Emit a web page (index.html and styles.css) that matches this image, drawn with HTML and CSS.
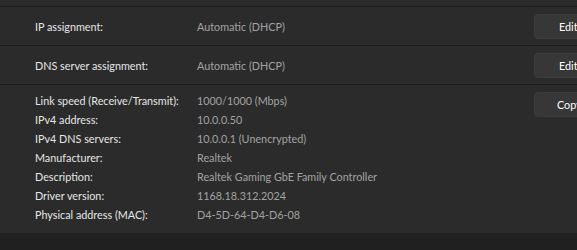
FILE: index.html
```html
<!DOCTYPE html>
<html lang="en">
<head>
    <meta charset="UTF-8">
    <title>Network properties</title>
    <link rel="stylesheet" href="styles.css">
</head>
<body>
    <div class="card">
        <div class="stub"></div>
        <div class="row">
            <div class="label">IP assignment:</div>
            <div class="value">Automatic (DHCP)</div>
            <div class="btn">Edit</div>
        </div>
        <div class="row">
            <div class="label">DNS server assignment:</div>
            <div class="value">Automatic (DHCP)</div>
            <div class="btn">Edit</div>
        </div>
        <div class="row info">
            <div class="grid">
                <div class="label">Link speed (Receive/Transmit):</div>
                <div class="value">1000/1000 (Mbps)</div>
                <div class="label">IPv4 address:</div>
                <div class="value">10.0.0.50</div>
                <div class="label">IPv4 DNS servers:</div>
                <div class="value">10.0.0.1 (Unencrypted)</div>
                <div class="label">Manufacturer:</div>
                <div class="value">Realtek</div>
                <div class="label">Description:</div>
                <div class="value">Realtek Gaming GbE Family Controller</div>
                <div class="label">Driver version:</div>
                <div class="value">1168.18.312.2024</div>
                <div class="label">Physical address (MAC):</div>
                <div class="value">D4-5D-64-D4-D6-08</div>
            </div>
            <div class="btn">Copy</div>
        </div>
    </div>
</body>
</html>
```

FILE: styles.css
```css
body {
    margin: 0;
    background-color: #202020;
    font-family: Lato, "Noto Sans", sans-serif;
    font-size: 10.8px;
    color: #e6e6e6;
    width: 577px;
    overflow: hidden;
}

.card {
    background-color: #2b2b2b;
}

.stub {
    height: 6px;
}

.row {
    display: flex;
    align-items: center;
    height: 38px;
    border-top: 1px solid #1d1d1d;
    padding-left: 35px;
}

.label {
    width: 162px;
    flex-shrink: 0;
}

.value {
    color: #a3a3a3;
    flex: 1;
}

.btn {
    box-sizing: border-box;
    flex-shrink: 0;
    width: 60px;
    height: 25px;
    line-height: 23px;
    margin-right: -17px;
    padding-left: 24px;
    background-color: #373737;
    border: 1px solid #3c3c3c;
    border-radius: 4px;
    color: #ffffff;
    white-space: nowrap;
}

.info {
    height: auto;
    align-items: flex-start;
    padding-top: 6px;
    padding-bottom: 9px;
}

.info .grid {
    flex: 1;
    display: grid;
    grid-template-columns: 162px 1fr;
    line-height: 19px;
}

.info .btn {
    margin-top: 1px;
    padding-left: 22px;
}
```
